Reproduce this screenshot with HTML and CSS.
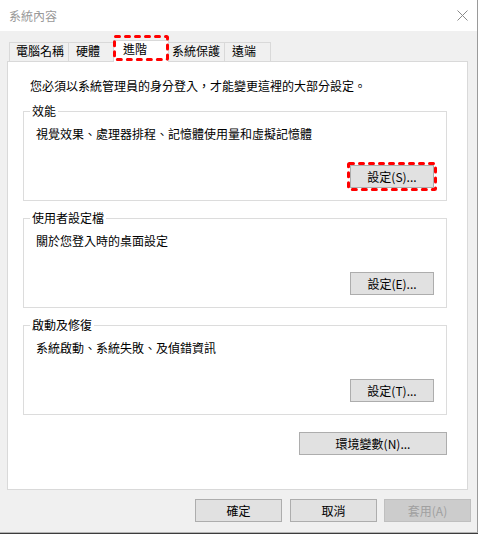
FILE: index.html
```html
<!DOCTYPE html>
<html lang="zh-Hant">
<head>
<meta charset="utf-8">
<title>系統內容</title>
<link rel="stylesheet" href="styles.css">
</head>
<body>
<div class="window">
  <div class="titlebar">
    <span class="title">系統內容</span>
    <svg class="close" width="11" height="11" viewBox="0 0 11 11"><path d="M0.5 0.5L10.5 10.5M10.5 0.5L0.5 10.5"/></svg>
  </div>
  <div class="tabs">
    <div class="tab t1">電腦名稱</div>
    <div class="tab t2">硬體</div>
    <div class="tab t3 sel">進階
      <svg class="mark mark-tab" width="56" height="26"><rect x="1.5" y="1.5" width="53" height="23" rx="1"/></svg>
    </div>
    <div class="tab t4">系統保護</div>
    <div class="tab t5">遠端</div>
  </div>
  <div class="panel">
    <p class="intro">您必須以系統管理員的身分登入，才能變更這裡的大部分設定。</p>
    <fieldset class="group">
      <legend>效能</legend>
      <p>視覺效果、處理器排程、記憶體使用量和虛擬記憶體</p>
      <div class="row">
        <span class="hl">
          <button class="btn set">設定(S)...</button>
          <svg class="mark mark-btn" width="90" height="29"><rect x="1.5" y="1.5" width="87" height="26" rx="1"/></svg>
        </span>
      </div>
    </fieldset>
    <fieldset class="group">
      <legend>使用者設定檔</legend>
      <p>關於您登入時的桌面設定</p>
      <div class="row"><button class="btn set">設定(E)...</button></div>
    </fieldset>
    <fieldset class="group">
      <legend>啟動及修復</legend>
      <p>系統啟動、系統失敗、及偵錯資訊</p>
      <div class="row"><button class="btn set">設定(T)...</button></div>
    </fieldset>
    <div class="row env-row"><button class="btn env">環境變數(N)...</button></div>
  </div>
  <div class="footer">
    <button class="btn ft ok">確定</button>
    <button class="btn ft">取消</button>
    <button class="btn ft" disabled>套用(A)</button>
  </div>
</div>
</body>
</html>
```
FILE: styles.css
```css
* { box-sizing: border-box; }
html, body { margin: 0; padding: 0; }
body {
  background: #3c3c3c;
  font-family: "Noto Sans CJK TC", "Noto Sans", sans-serif;
  font-size: 12px;
  line-height: 16px;
  color: #000;
}
.window {
  width: 478px;
  height: 533px;
  background: #f0f0f0;
  border-right: 1px solid #9a9a9a;
  border-bottom: 1px solid #b4b4b4;
  display: flex;
  flex-direction: column;
}
.titlebar {
  flex: none;
  height: 31px;
  background: #fff;
  display: flex;
  align-items: center;
  justify-content: space-between;
  padding: 0 9px 0 9px;
}
.title { color: #999; }
.close { display: block; }
.close path { stroke: #8a8a8a; stroke-width: 1; fill: none; }

.tabs {
  flex: none;
  height: 30px;
  display: flex;
  align-items: flex-end;
  padding: 9px 0 0 9px;
}
.tab {
  height: 19px;
  border: 1px solid #d9d9d9;
  border-bottom: 0;
  margin-left: -1px;
  background: #f0f0f0;
  white-space: nowrap;
}
.t1 { margin-left: 0; width: 60px; padding-left: 6px; }
.t2 { width: 48px; padding-left: 7px; }
.t3 { width: 56px; padding-left: 9px; }
.t4 { width: 59px; padding-left: 5px; }
.t5 { width: 47px; padding-left: 7px; }
.tab.sel {
  height: 22px;
  background: #fff;
  margin-left: -3px;
  margin-right: -2px;
  margin-bottom: -1px;
  position: relative;
  z-index: 1;
}
.mark {
  position: absolute;
  fill: none;
  stroke: #f00;
  stroke-width: 3;
  stroke-dasharray: 4 6;
  stroke-linecap: round;
  pointer-events: none;
}
.mark-tab { left: -1px; top: -6px; }
.hl { position: relative; display: flex; }
.mark-btn { left: -3px; top: -3px; }

.panel {
  flex: none;
  margin-left: 7px;
  width: 461px;
  height: 429px;
  background: #fff;
  border: 1px solid #d9d9d9;
  padding-top: 16px;
}
.intro { margin: 0; padding-left: 22px; }
.group {
  margin: 9px 20px 0 15px;
  border: 1px solid #dcdcdc;
  padding: 7px 12px 12px 12px;
  min-width: 0;
}
.group legend {
  padding: 0 2px;
  margin-left: -6px;
  line-height: 16px;
}
.group p { margin: 0; }
.row {
  display: flex;
  justify-content: flex-end;
  margin-top: 23px;
}
.env-row { margin: 17px 20px 0 0; }

.btn {
  font: inherit;
  line-height: 16px;
  height: 23px;
  padding: 0;
  background: #e1e1e1;
  border: 1px solid #adadad;
  color: #000;
  border-radius: 0;
}
.btn.set { width: 84px; }
.btn.env { width: 148px; }
.btn.ft { width: 87px; }
.btn:disabled {
  background: #cccccc;
  border-color: #bfbfbf;
  color: #a0a0a0;
}
.footer {
  flex: none;
  display: flex;
  justify-content: flex-end;
  gap: 7px;
  padding: 9px 6px 0 0;
}
.footer .ok { margin-right: 1px; }
```
